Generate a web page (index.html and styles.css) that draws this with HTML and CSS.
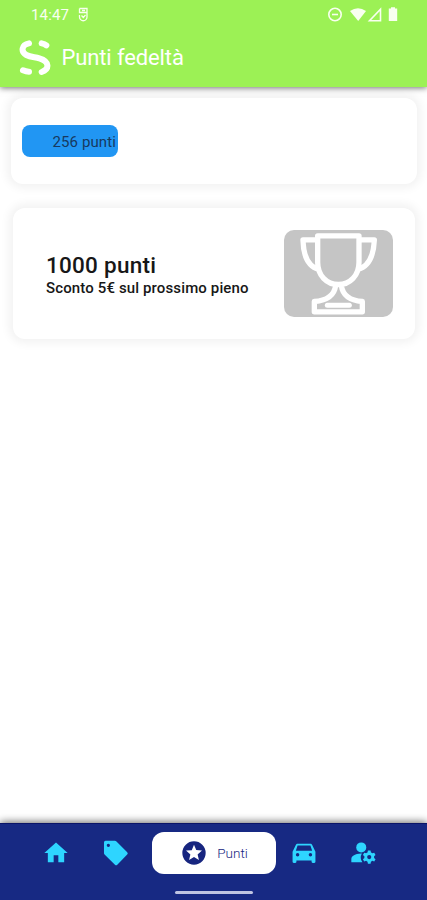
FILE: index.html
```html
<!DOCTYPE html>
<html lang="it">
<head>
<meta charset="utf-8">
<title>Punti fedeltà</title>
<link rel="stylesheet" href="styles.css">
</head>
<body>
<div class="app">
  <header class="header">
    <div class="status">
      <span class="clock">14:47</span>
      <svg class="status-app" viewBox="0 0 12 16" fill="none" stroke="currentColor"><path d="M2.500 1.500h7.500v8.500a3.750 3.750 0 0 1-7.500 0V8M2.500 1.500v4h7.500M5 3.500h3M4.500 8.500l1.800 2 2.200-2.500" stroke-width="1.300"/></svg>
      <svg class="status-icons" viewBox="0 0 72 16" fill="none" stroke="currentColor">
        <circle cx="9" cy="7.500" r="6.200" stroke-width="1.600"/><path d="M6 7.500h6" stroke-width="1.600"/>
        <path d="M24 4Q32-1.500 40 4L32.200 14z" fill="currentColor" stroke="none"/>
        <path d="M43.500 13.700h11V2.200z" stroke-width="1.600"/>
        <path d="M62.800 1.500h2.200V.3h4v1.200h2.200V14h-8.400z" fill="currentColor" stroke="none"/>
      </svg>
    </div>
    <div class="toolbar">
      <svg class="logo" viewBox="57 114 99 111" fill="none" stroke="currentColor" stroke-width="18" stroke-linecap="round">
        <path d="M87 127C64 131 62 153 79 162C92 169 105 168 118 172C149 181 149 205 125 213M125 127q9 2 14 6M69 208q9 4 18 4"/>
      </svg>
      <h1>Punti fedeltà</h1>
    </div>
  </header>
  <main class="content">
    <section class="card balance"><div class="progress">256 punti</div></section>
    <section class="card reward">
      <div class="reward-text"><h2>1000 punti</h2><p>Sconto 5€ sul prossimo pieno</p></div>
      <div class="thumb">
        <svg viewBox="72 92 327 260" fill="none" stroke="currentColor" stroke-width="16">
          <path d="M173 109H297V188C297 228 270 255 235 255S173 228 173 188zM171 121H129C130 166 143 201 177 210M299 121H343C341 168 328 201 293 210M227 258C223 288 202 303 163 306V337H307V306C269 303 248 288 244 258" stroke-linejoin="round"/>
          <path d="M202 317H268" stroke-width="15" stroke-linecap="round"/>
        </svg>
      </div>
    </section>
  </main>
  <nav class="nav">
    <div class="tabs">
      <a class="tab"><svg class="icon" viewBox="0 0 24 24"><path d="M10 20v-6h4v6h5v-8h3L12 3 2 12h3v8z"/></svg></a>
      <a class="tab"><svg class="icon" viewBox="0 0 24 24"><path fill-rule="evenodd" d="M3 1.500h8q.8 0 1.400.6l9.200 9.200q1 1 0 2l-8.500 8.800q-1 1-2 0l-8.700-8.700q-.7-.7-.7-1.500V3q0-1.500 1.300-1.500zM5.400 4a1.400 1.400 0 1 0 .1 2.800A1.400 1.400 0 0 0 5.400 4z"/></svg></a>
      <a class="tab active"><svg class="icon" viewBox="0 0 24 24"><path fill-rule="evenodd" d="M12 2a10 10 0 1 0 0 20 10 10 0 0 0 0-20zm4.230 16L12 15.450 7.770 18l1.120-4.810-3.730-3.230 4.920-.42L12 5l1.920 4.530 4.920.42-3.730 3.230z"/></svg><span>Punti</span></a>
      <a class="tab"><svg class="icon" viewBox="0 0 24 24"><path fill-rule="evenodd" d="M18.920 5.010C18.720 4.420 18.160 4 17.500 4h-11c-.66 0-1.210.42-1.420 1.010L2.200 11v8.500c0 .55.450 1 1 1h1.300c.55 0 1-.45 1-1v-1h13v1c0 .55.450 1 1 1h1.300c.55 0 1-.45 1-1V11zM6.500 15a1.500 1.500 0 1 1 0-3 1.500 1.500 0 0 1 0 3zm11 0a1.500 1.500 0 1 1 0-3 1.500 1.500 0 0 1 0 3zM5 10l1.500-4.500h11L19 10z"/></svg></a>
      <a class="tab"><svg class="icon" viewBox="0 0 24 24"><circle cx="10.500" cy="7.200" r="4.300"/><path d="M11 12.500c-2.800-.1-5.300.5-7.400 1.900C2.400 15.200 2 16.200 2 17.500V20h9.500A7 7 0 0 1 11 12.500z"/><path fill-rule="evenodd" transform="translate(-1.700 -2.400) scale(1.120)" d="M20.750 16c0-.22-.03-.42-.06-.63l1.140-1.010-1-1.730-1.450.49c-.32-.27-.68-.48-1.080-.63L18 11h-2l-.3 1.490c-.4.150-.76.360-1.080.63l-1.450-.49-1 1.730 1.140 1.010c-.03.210-.06.410-.06.630s.03.420.06.630l-1.140 1.010 1 1.730 1.450-.49c.32.270.68.480 1.080.63L16 21h2l.3-1.490c.4-.15.760-.36 1.080-.63l1.450.49 1-1.730-1.140-1.010c.03-.21.060-.41.060-.63zM17 17.600a1.600 1.600 0 1 1 0-3.200 1.600 1.600 0 0 1 0 3.200z"/></svg></a>
    </div>
    <div class="gesture"></div>
  </nav>
</div>
</body>
</html>
```
FILE: styles.css
```css
* { box-sizing: border-box; margin: 0; }
body { font-family: Roboto, sans-serif; background: #fff; }
.app { width: 427px; height: 900px; display: flex; flex-direction: column; overflow: hidden; }
svg { display: block; flex: none; }
.header { flex: none; height: 87px; background: #9cf155; color: #fff; box-shadow: 0 1px 6px rgba(0,0,0,.55); z-index: 1; }
.status { height: 29px; padding: 0 29px 0 31px; display: flex; align-items: center; color: #f8ffef; }
.clock { font-size: 15px; letter-spacing: .15px; }
.status-app { width: 12px; height: 16px; margin-left: 8px; }
.status-icons { width: 72px; height: 16px; margin-left: auto; }
.toolbar { height: 56px; padding-left: 19px; display: flex; align-items: center; }
.logo { width: 33px; height: 37px; }
h1 { margin-left: 9.500px; padding-top: 2px; font-size: 22px; line-height: 28px; font-weight: 400; letter-spacing: -.12px; white-space: nowrap; }
.content { flex: 1; padding: 11px 10px 0 11px; }
.card { background: #fff; border-radius: 12px; box-shadow: 0 0 10px 4px rgba(0,0,0,.055); }
.balance { height: 86px; padding: 27px 11px; }
.progress { width: 96px; height: 32px; border-radius: 8px; background: #2196f3; padding-right: 2px; text-align: right; font-size: 15px; line-height: 34px; letter-spacing: .1px; color: #17395f; white-space: nowrap; }
.reward { height: 131px; margin: 24px 2px 0; padding: 0 22px 0 33px; display: flex; align-items: center; justify-content: space-between; }
.reward-text { padding-top: 2px; color: #171717; white-space: nowrap; }
h2 { font-size: 22.500px; line-height: 26px; font-weight: 500; letter-spacing: .25px; }
p { font-size: 15px; line-height: 20px; font-weight: 500; letter-spacing: .13px; }
.thumb { width: 109px; height: 87px; border-radius: 10px; background: #c5c5c5; color: #fff; overflow: hidden; }
.thumb svg { width: 109px; height: 87px; }
.nav { flex: none; height: 77px; background: #172983; border-top: 1px solid #0b1568; box-shadow: 0 -1px 8px rgba(0,0,0,.6); display: flex; flex-direction: column; align-items: center; }
.tabs { width: 100%; padding: 8px 0 0 26px; display: grid; grid-template-columns: 60px 60px 136px 43px 76px; justify-items: center; }
.tab { height: 42px; display: flex; align-items: center; justify-content: center; color: #2ed5ff; }
.icon { width: 28px; height: 28px; fill: currentColor; }
.active { width: 124px; border-radius: 12px; background: #fff; color: #17257f; gap: 9px; font-size: 13.500px; font-weight: 300; }
.gesture { width: 78px; height: 3px; border-radius: 2px; margin-top: 17px; background: #bfc4e2; }
```
